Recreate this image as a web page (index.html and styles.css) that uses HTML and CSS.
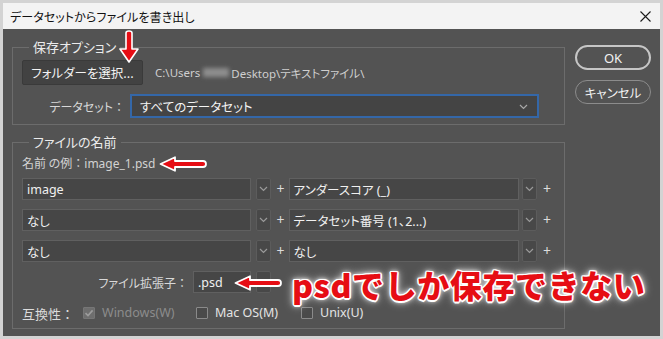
FILE: index.html
```html
<!DOCTYPE html>
<html lang="ja">
<head>
<meta charset="utf-8">
<title>データセットからファイルを書き出し</title>
<link rel="stylesheet" href="styles.css">
</head>
<body>
<div class="window">
  <div class="titlebar">
    <span class="title">データセットからファイルを書き出し</span>
    <svg class="close" width="11" height="11" viewBox="0 0 11 11"><path d="M0.5 0.5L10.5 10.5M10.5 0.5L0.5 10.5" stroke="#1a1a1a" stroke-width="1.1" fill="none"/></svg>
  </div>
  <div class="body">
    <div class="main">
      <fieldset class="group g1">
        <legend>保存オプション</legend>
        <div class="row-folder">
          <button class="btn-folder">フォルダーを選択...</button>
          <span class="path">C:\Users<span class="blur"></span>Desktop\テキストファイル\</span>
        </div>
        <div class="row-dataset">
          <span class="label label-ds">データセット<span class="colon">：</span></span>
          <div class="select">
            <span>すべてのデータセット</span>
            <svg class="chev" width="9" height="6" viewBox="0 0 9 6"><path d="M1 1L4.5 4.5L8 1" stroke="#a8a8a8" stroke-width="1.2" fill="none"/></svg>
          </div>
        </div>
      </fieldset>
      <fieldset class="group g2">
        <legend>ファイルの名前</legend>
        <div class="example">名前 の例<span class="colon">：</span><span class="latin">image_1.psd</span></div>
        <div class="name-row">
          <div class="field wide">image</div>
          <div class="chevbox"><svg width="9" height="6" viewBox="0 0 9 6"><path d="M1 1L4.5 4.5L8 1" stroke="#9a9a9a" stroke-width="1.2" fill="none"/></svg></div>
          <span class="plus">+</span>
          <div class="field wide2">アンダースコア (_)</div>
          <div class="chevbox"><svg width="9" height="6" viewBox="0 0 9 6"><path d="M1 1L4.5 4.5L8 1" stroke="#9a9a9a" stroke-width="1.2" fill="none"/></svg></div>
          <span class="plus">+</span>
        </div>
        <div class="name-row">
          <div class="field wide">なし</div>
          <div class="chevbox"><svg width="9" height="6" viewBox="0 0 9 6"><path d="M1 1L4.5 4.5L8 1" stroke="#9a9a9a" stroke-width="1.2" fill="none"/></svg></div>
          <span class="plus">+</span>
          <div class="field wide2">データセット番号 (1、2...)</div>
          <div class="chevbox"><svg width="9" height="6" viewBox="0 0 9 6"><path d="M1 1L4.5 4.5L8 1" stroke="#9a9a9a" stroke-width="1.2" fill="none"/></svg></div>
          <span class="plus">+</span>
        </div>
        <div class="name-row">
          <div class="field wide">なし</div>
          <div class="chevbox"><svg width="9" height="6" viewBox="0 0 9 6"><path d="M1 1L4.5 4.5L8 1" stroke="#9a9a9a" stroke-width="1.2" fill="none"/></svg></div>
          <span class="plus">+</span>
          <div class="field wide2">なし</div>
          <div class="chevbox"><svg width="9" height="6" viewBox="0 0 9 6"><path d="M1 1L4.5 4.5L8 1" stroke="#9a9a9a" stroke-width="1.2" fill="none"/></svg></div>
          <span class="plus">+</span>
        </div>
        <div class="ext-row">
          <span class="label label-ext">ファイル拡張子<span class="colon">：</span></span>
          <div class="field ext">.psd</div>
          <div class="chevbox"><svg width="9" height="6" viewBox="0 0 9 6"><path d="M1 1L4.5 4.5L8 1" stroke="#9a9a9a" stroke-width="1.2" fill="none"/></svg></div>
        </div>
        <div class="compat">
          <span class="label label-compat">互換性<span class="colon">：</span></span>
          <span class="check-item item-win disabled">
            <span class="box checked"><svg width="10" height="10" viewBox="0 0 10 10"><path d="M1.5 5.2L4 7.6L8.6 2.4" stroke="#9c9c9c" stroke-width="1.6" fill="none"/></svg></span>
            <span class="latin">Windows(W)</span>
          </span>
          <span class="check-item item-mac">
            <span class="box"></span>
            <span class="latin">Mac OS(M)</span>
          </span>
          <span class="check-item">
            <span class="box"></span>
            <span class="latin">Unix(U)</span>
          </span>
        </div>
      </fieldset>
    </div>
    <div class="actions">
      <button class="pill ok">OK</button>
      <button class="pill cancel">キャンセル</button>
    </div>
  </div>

  <svg class="arrow-down" width="20" height="33" viewBox="0 0 20 33"><path d="M7 3Q7 1 10 1Q13 1 13 3V19H19L10 32L1 19H7Z" fill="#e60d14" stroke="#ffffff" stroke-width="1.6" stroke-linejoin="round"/></svg>
  <svg class="arrow-left a1" width="48" height="16" viewBox="0 0 48 16"><path d="M1.5 8L16 1.2V5H44Q47 5 47 8Q47 11 44 11H16V14.8Z" fill="#e60d14" stroke="#ffffff" stroke-width="1.8" stroke-linejoin="round"/></svg>
  <svg class="arrow-left a2" width="48" height="16" viewBox="0 0 48 16"><path d="M1.5 8L16 1.2V5H44Q47 5 47 8Q47 11 44 11H16V14.8Z" fill="#e60d14" stroke="#ffffff" stroke-width="1.8" stroke-linejoin="round"/></svg>
  <div class="note">psdでしか保存できない</div>
</div>
</body>
</html>
```

FILE: styles.css
```css
* { box-sizing: border-box; }
html, body { margin: 0; padding: 0; }
body {
  width: 663px;
  height: 339px;
  overflow: hidden;
  font-family: "Noto Sans CJK JP", "Noto Sans", sans-serif;
}
.window {
  position: relative;
  width: 663px;
  height: 339px;
  border: 3px solid #d3d3d3;
  background: #535353;
  display: flex;
  flex-direction: column;
}
.titlebar {
  height: 26px;
  flex: none;
  background: #f3f3f3;
  display: flex;
  align-items: center;
  justify-content: space-between;
  padding: 0 9px 0 7px;
  font-size: 12px;
  color: #111;
}
.title { font-feature-settings: "palt"; letter-spacing: 0.1px; }
.body {
  flex: 1;
  display: flex;
  padding: 9px 9px 0 9px;
  gap: 10px;
  color: #e8e8e8;
  font-size: 12px;
}
.main {
  width: 553px;
  flex: none;
  display: flex;
  flex-direction: column;
  gap: 8px;
}
.group {
  margin: 0;
  min-width: 0;
  border: 1px solid #6c6c6c;
}
.group legend {
  margin-left: 7px;
  padding: 0 4px;
  font-size: 13px;
  line-height: 18px;
  color: #ececec;
  font-feature-settings: "palt";
}
.g1 { padding: 4px 9px 6px 9px; }
.g2 { padding: 3px 9px 7px 9px; }

.row-folder {
  display: flex;
  align-items: center;
  height: 25px;
}
.btn-folder {
  width: 121px;
  height: 25px;
  background: #424242;
  border: 1px solid #3a3a3a;
  border-radius: 2px;
  color: #f2f2f2;
  font-family: inherit;
  font-size: 12.5px;
  padding: 0;
  font-feature-settings: "palt";
}
.path {
  margin-left: 12px;
  font-family: "Noto Sans", "Noto Sans CJK JP", sans-serif;
  font-size: 11.5px;
  color: #cfcfcf;
  font-feature-settings: "palt";
  display: flex;
  align-items: center;
}
.blur {
  display: inline-block;
  width: 26px;
  height: 9px;
  margin: 0 2px 0 3px;
  background: #8e8e8e;
  filter: blur(2px);
}
.row-dataset {
  margin-top: 9px;
  display: flex;
  align-items: center;
  height: 24px;
  gap: 5px;
}
.label {
  color: #d8d8d8;
  font-size: 12px;
  font-feature-settings: "palt";
}
.colon { font-feature-settings: normal; }
.label-ds { width: 103px; text-align: right; }
.select {
  width: 409px;
  height: 24px;
  border: 2px solid #3467a8;
  background: #444;
  display: flex;
  align-items: center;
  justify-content: space-between;
  padding: 0 9px 0 8px;
  color: #f4f4f4;
  font-size: 12.5px;
  font-feature-settings: "palt";
}
.chev { margin-top: 1px; }

.example {
  line-height: 18px;
  margin-bottom: 5px;
  color: #d2d2d2;
  font-size: 12px;
  font-feature-settings: "palt";
}
.latin { font-family: "Noto Sans", "Noto Sans CJK JP", sans-serif; }
.name-row {
  display: flex;
  align-items: center;
  height: 22px;
  margin-bottom: 9px;
}
.field {
  height: 22px;
  background: #464646;
  border: 1px solid #606060;
  display: flex;
  align-items: center;
  padding-left: 4px;
  color: #f0f0f0;
  font-size: 12.5px;
  font-family: "Noto Sans", "Noto Sans CJK JP", sans-serif;
  font-feature-settings: "palt";
}
.wide { width: 229px; }
.wide2 { width: 231px; }
.chevbox {
  width: 15px;
  height: 22px;
  margin-left: 5px;
  background: #484848;
  border: 1px solid #5c5c5c;
  border-radius: 2px;
  display: flex;
  align-items: center;
  justify-content: center;
}
.name-row .wide2 + .chevbox { margin-left: 3px; }
.plus {
  width: 18px;
  padding-left: 2px;
  text-align: center;
  font-family: "Noto Sans", sans-serif;
  font-size: 14px;
  color: #dcdcdc;
  line-height: 22px;
}
.ext-row {
  display: flex;
  align-items: center;
  height: 22px;
}
.label-ext { width: 166px; text-align: right; margin-right: 5px; }
.ext { width: 58px; }
.compat {
  margin-top: 12px;
  height: 16px;
  display: flex;
  align-items: center;
}
.label-compat {
  width: 61px;
  font-size: 13px;
  color: #dcdcdc;
}
.check-item {
  display: flex;
  align-items: center;
  gap: 7px;
  font-size: 12.5px;
  line-height: 16px;
  color: #e4e4e4;
}
.item-win { width: 113px; }
.item-mac { width: 105px; }
.check-item.disabled { color: #8c8c8c; }
.box {
  width: 12px;
  height: 12px;
  border: 1px solid #8a8a8a;
  background: #4a4a4a;
  border-radius: 1px;
  display: flex;
  align-items: center;
  justify-content: center;
}
.box.checked { background: #6e6e6e; border-color: #767676; }

.actions {
  margin-top: 7px;
  display: flex;
  flex-direction: column;
  gap: 10px;
}
.pill {
  width: 76px;
  background: transparent;
  border-radius: 13px;
  color: #f2f2f2;
  font-family: inherit;
  padding: 0;
  font-feature-settings: "palt";
}
.ok {
  height: 25px;
  border: 2px solid #c6c6c6;
  font-family: "Noto Sans", sans-serif;
  font-size: 13px;
}
.cancel {
  height: 24px;
  border: 1px solid #8c8c8c;
  font-size: 12.5px;
}

.arrow-down { position: absolute; left: 116px; top: 27px; }
.arrow-left { position: absolute; }
.a1 { left: 156px; top: 153px; }
.a2 { left: 231px; top: 272px; }
.note {
  position: absolute;
  left: 289px;
  top: 266px;
  font-family: "Noto Sans CJK JP", sans-serif;
  font-weight: 900;
  font-size: 32px;
  line-height: 31px;
  letter-spacing: 0.6px;
  color: #e60d14;
  white-space: nowrap;
  text-shadow:
    1.5px 0 0 #fff, -1.5px 0 0 #fff, 0 1.5px 0 #fff, 0 -1.5px 0 #fff,
    1px 1px 0 #fff, -1px -1px 0 #fff, 1px -1px 0 #fff, -1px 1px 0 #fff,
    0 0 4px #fff, 0 0 7px rgba(255,255,255,0.85), 0 0 11px rgba(255,255,255,0.6);
}
```
